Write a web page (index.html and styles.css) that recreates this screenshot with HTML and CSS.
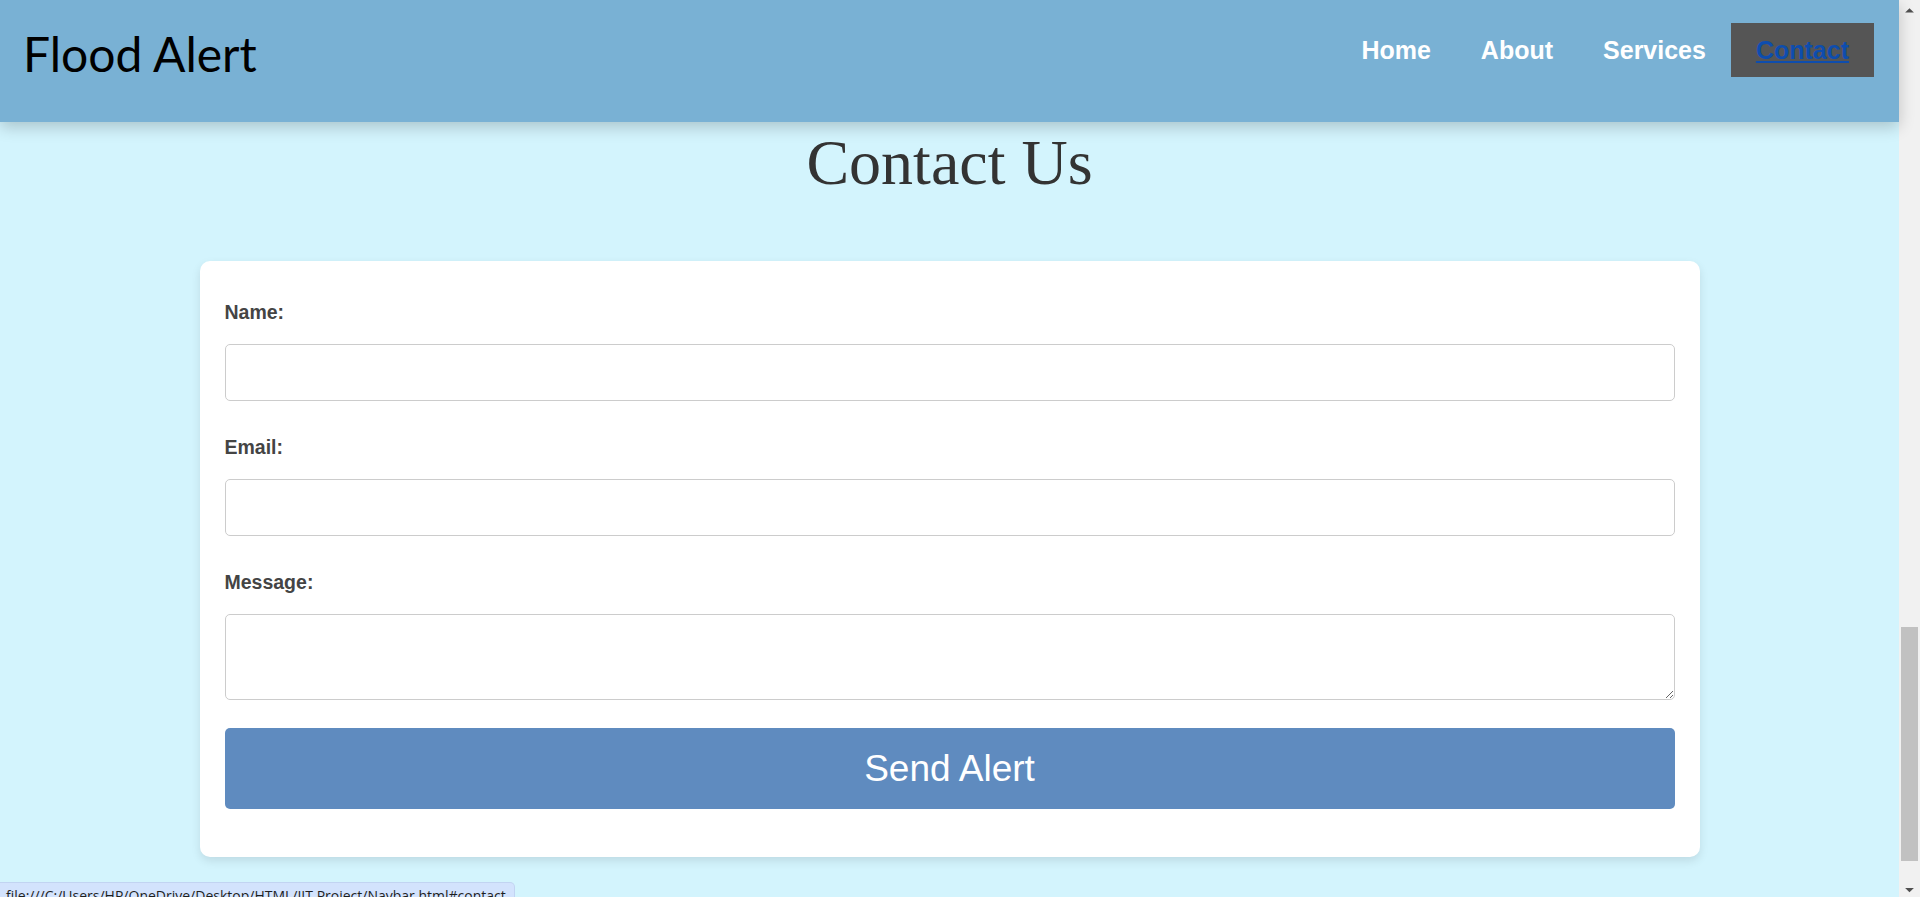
FILE: index.html
```html
<!DOCTYPE html>
<html lang="en">
<head>
<meta charset="utf-8">
<title>Flood Alert - Contact</title>
<link rel="stylesheet" href="styles.css">
</head>
<body>
<div class="window">
  <div class="page">
    <header class="topbar">
      <div class="logo">Flood Alert</div>
      <nav class="nav">
        <a class="nav-link" href="#home">Home</a>
        <a class="nav-link" href="#about">About</a>
        <a class="nav-link" href="#services">Services</a>
        <a class="nav-link active" href="#contact">Contact</a>
      </nav>
    </header>
    <main class="content" id="contact">
      <h1 class="title">Contact Us</h1>
      <form class="card">
        <label class="field-label" for="name">Name:</label>
        <input class="field" type="text" id="name">
        <label class="field-label" for="email">Email:</label>
        <input class="field" type="email" id="email">
        <label class="field-label" for="message">Message:</label>
        <textarea class="field area" id="message"></textarea>
        <button class="send" type="button">Send Alert</button>
      </form>
    </main>
  </div>
  <div class="scrollbar">
    <svg class="arrow-up" width="21" height="17" viewBox="0 0 21 17"><path d="M6 13 L10.5 8.5 L15 13 Z" fill="#505050"/></svg>
    <div class="thumb"></div>
    <svg class="arrow-down" width="21" height="10" viewBox="0 0 21 10"><path d="M6 1 L15 1 L10.5 5.5 Z" fill="#505050"/></svg>
  </div>
</div>
<div class="status">file:///C:/Users/HP/OneDrive/Desktop/HTML/IIT Project/Navbar.html#contact</div>
</body>
</html>
```

FILE: styles.css
```css
html, body {
  margin: 0;
  padding: 0;
  height: 897px;
  overflow: hidden;
}

.window {
  display: flex;
  height: 897px;
}

.page {
  flex: 1;
  background: #d3f4fd;
  display: flex;
  flex-direction: column;
  min-width: 0;
}

.topbar {
  position: relative;
  z-index: 2;
  height: 122px;
  flex-shrink: 0;
  box-sizing: border-box;
  background: #79b1d4;
  box-shadow: 0 5px 15px rgba(0, 0, 0, 0.2);
  display: flex;
  justify-content: space-between;
  align-items: flex-start;
  padding: 0 25px 0 23px;
}

.logo {
  margin-top: 30px;
  font-family: "Lato", "Open Sans", sans-serif;
  font-size: 48px;
  line-height: 48px;
  color: #000;
}

.nav {
  display: flex;
  margin-top: 23px;
}

.nav-link {
  display: block;
  padding: 14px 25px;
  font-family: "Liberation Sans", Arial, sans-serif;
  font-weight: bold;
  font-size: 25px;
  line-height: 26px;
  color: #fff;
  text-decoration: none;
}

.nav-link.active {
  background: #555555;
  color: #0e4dae;
  text-decoration: underline;
}

.content {
  flex: 1;
  padding: 0 199px;
}

.title {
  margin: 4px 0 61px;
  text-align: center;
  font-family: "Liberation Serif", "Times New Roman", serif;
  font-weight: normal;
  font-size: 64px;
  color: #333;
}

.card {
  max-width: 1500px;
  margin: 0 auto;
  box-sizing: border-box;
  background: #fff;
  border-radius: 10px;
  box-shadow: 0 4px 10px rgba(0, 0, 0, 0.1);
  padding: 25px 25px 48px;
  display: flex;
  flex-direction: column;
}

.field-label {
  display: block;
  margin: 15px 0 20px;
  font-family: "Liberation Sans", Arial, sans-serif;
  font-weight: bold;
  font-size: 19.5px;
  color: #444;
}

.field {
  display: block;
  width: 100%;
  box-sizing: border-box;
  height: 57px;
  margin: 0 0 20px;
  border: 1px solid #cccccc;
  border-radius: 5px;
  background: #fff;
  font-family: "Liberation Sans", Arial, sans-serif;
  font-size: 16px;
  padding: 10px;
}

.field.area {
  height: 86px;
  margin-bottom: 28px;
  resize: vertical;
}

.send {
  display: block;
  width: 100%;
  height: 81px;
  border: none;
  border-radius: 5px;
  background: #5f8bbf;
  color: #fff;
  font-family: "Liberation Sans", Arial, sans-serif;
  font-size: 37px;
  cursor: pointer;
}

.scrollbar {
  width: 21px;
  flex-shrink: 0;
  background: #f1f1f1;
  display: flex;
  flex-direction: column;
}

.arrow-up {
  display: block;
}

.thumb {
  margin: 610px 2px 0 2px;
  height: 242px;
  background: #c1c1c1;
}

.arrow-down {
  display: block;
  margin-top: 26px;
}

.status {
  position: fixed;
  left: 0;
  bottom: -9px;
  height: 24px;
  box-sizing: border-box;
  padding: 4px 8px 0 6px;
  background: #d3e3fd;
  border: 1px solid #c2d4f2;
  border-left: none;
  border-radius: 0 5px 0 0;
  font-family: "Open Sans", "Noto Sans", sans-serif;
  font-size: 14px;
  line-height: 18px;
  color: #1f1f1f;
  white-space: nowrap;
}
```
